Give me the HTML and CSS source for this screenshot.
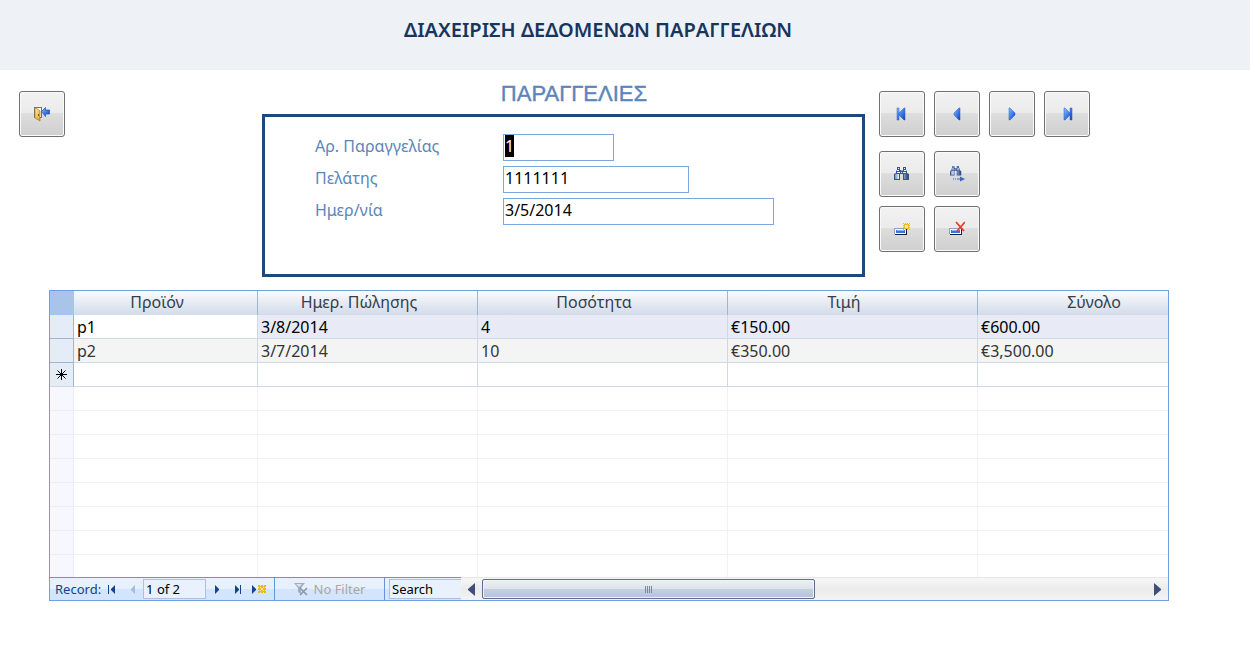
FILE: index.html
```html
<!DOCTYPE html>
<html lang="el">
<head>
<meta charset="utf-8">
<title>Διαχείριση Δεδομένων Παραγγελιών</title>
<link rel="stylesheet" href="styles.css">
</head>
<body>
<svg class="defs" aria-hidden="true">
  <defs>
    <linearGradient id="blue" x1="0" y1="0" x2="1" y2="1">
      <stop offset="0" stop-color="#8fc0ff"/><stop offset=".5" stop-color="#3f7fee"/><stop offset="1" stop-color="#123fae"/>
    </linearGradient>
    <linearGradient id="steel" x1="0" y1="0" x2="1" y2="0">
      <stop offset="0" stop-color="#6f8fc8"/><stop offset=".35" stop-color="#ffffff"/><stop offset="1" stop-color="#27427c"/>
    </linearGradient>
    <linearGradient id="gold" x1="0" y1="0" x2="1" y2="1">
      <stop offset="0" stop-color="#fff3b8"/><stop offset="1" stop-color="#e0980c"/>
    </linearGradient>
    <g id="star"><path d="M0 0h1v1h1v-1h1v1h1v-1h1v1h1v-1h1v1h-1v1h1v1h-1v1h1v1h-1v1h1v1h-1v-1h-1v1h-1v-1h-1v1h-1v-1h-1v1h-1v-1h1v-1h-1v-1h1v-1h-1v-1h1v-1h-1z" fill="#e8bb22"/><path d="M2 2h3v3h-3z" fill="#fff39a"/></g>
    <g id="glasses">
      <path d="M3 1h3v3h1l1 1 1-1v-3h3v3l1 1v2l2 1v6h-6v-6h-3v6h-6v-6l2-1v-2l1-1z" fill="#34559c"/>
      <path d="M4 2h1v1h-1zM10 2h1v1h-1zM3 4h2v1h-2zM10 4h2v1h-2zM3 6h3v1h-3zM9 6h3v1h-3zM7 6h1v1h-1z" fill="#eaf2ff"/>
      <path d="M1 8h4v5h-4zM10 8h4v5h-4z" fill="url(#steel)"/>
    </g>
    <g id="record"><path d="M1 8h12v6h-12z" fill="#16204a"/><path d="M0 7h12v6h-12z" fill="#8da0c4"/><path d="M1 8h11v5h-11z" fill="#fff"/><path d="M2 9h9v3h-9z" fill="#3c74dc"/><path d="M3 9h7v1h-7z" fill="#83b3fa"/></g>
  </defs>
</svg>

<header class="banner"><h1 class="banner-title">ΔΙΑΧΕΙΡΙΣΗ ΔΕΔΟΜΕΝΩΝ ΠΑΡΑΓΓΕΛΙΩΝ</h1></header>

<main>
  <section class="top">
    <button class="tool" type="button" aria-label="Έξοδος">
      <svg class="icon" viewBox="0 0 16 16"><path d="M0 1h8v11h-8z" fill="#77736a"/><path d="M2 2h5v9h-5z" fill="#fff"/><path d="M1 2h1l4 3v10l-5-3z" fill="url(#gold)" stroke="#a8771c" stroke-width=".7"/><path d="M4 8h1v2h-1z" fill="#7a5010"/><path d="M7.500 5.500l4-4v2.500h4v4h-4v2.500z" fill="url(#blue)" stroke="#2c58b8" stroke-width=".8"/></svg>
    </button>

    <form class="order">
      <h2 class="order-title">ΠΑΡΑΓΓΕΛΙΕΣ</h2>
      <div class="panel">
        <label class="panel-label" for="order-no">Αρ. Παραγγελίας</label><input class="field field-s" id="order-no" value="1" autofocus>
        <label class="panel-label" for="customer">Πελάτης</label><input class="field field-m" id="customer" value="1111111">
        <label class="panel-label" for="order-date">Ημερ/νία</label><input class="field field-l" id="order-date" value="3/5/2014">
      </div>
    </form>

    <div class="tools">
      <div class="tool-row tool-row-nav">
        <button class="tool" type="button" aria-label="Πρώτη"><svg class="icon" viewBox="0 0 16 16"><path d="M3 2h2v12h-2zM11 2v12h-1l-5-5v-2l5-5z" fill="url(#blue)" stroke="#2459c8" stroke-width=".5"/></svg></button>
        <button class="tool" type="button" aria-label="Προηγούμενη"><svg class="icon" viewBox="0 0 16 16"><path d="M11 2v12h-1l-5-5v-2l5-5z" fill="url(#blue)" stroke="#2459c8" stroke-width=".5"/></svg></button>
        <button class="tool" type="button" aria-label="Επόμενη"><svg class="icon" viewBox="0 0 16 16"><path d="M5 2v12h1l5-5v-2l-5-5z" fill="url(#blue)" stroke="#2459c8" stroke-width=".5"/></svg></button>
        <button class="tool" type="button" aria-label="Τελευταία"><svg class="icon" viewBox="0 0 16 16"><path d="M5 2v12h1l5-5v-2l-5-5zM11 2h2v12h-2z" fill="url(#blue)" stroke="#2459c8" stroke-width=".5"/></svg></button>
      </div>
      <div class="tool-row">
        <button class="tool" type="button" aria-label="Εύρεση"><svg class="icon" viewBox="0 0 16 16"><use href="#glasses"/></svg></button>
        <button class="tool" type="button" aria-label="Εύρεση επόμενου"><svg class="icon" viewBox="0 0 16 16"><use href="#glasses" transform="translate(1 -1) scale(.75)"/><path d="M4 12.500h1v1h-1zM6 12.500h1v1h-1zM8 12.500h3v-2l5 2.500-5 2.500v-2h-3z" fill="#3d68b8"/></svg></button>
      </div>
      <div class="tool-row">
        <button class="tool" type="button" aria-label="Νέα εγγραφή"><svg class="icon" viewBox="0 0 16 16"><use href="#record"/><use href="#star" x="9" y="2"/></svg></button>
        <button class="tool" type="button" aria-label="Διαγραφή"><svg class="icon" viewBox="0 0 16 16"><use href="#record"/><path d="M7 1l8 9M16 1l-8 9" stroke="#ee3a22" stroke-width="1.800"/></svg></button>
      </div>
    </div>
  </section>

  <section class="sheet">
    <div class="sheet-body">
      <table class="grid">
        <colgroup><col class="c-sel"><col class="c-product"><col class="c-date"><col class="c-num"><col class="c-num"><col class="c-num"></colgroup>
        <thead><tr><th class="corner"></th><th>Προϊόν</th><th>Ημερ. Πώλησης</th><th>Ποσότητα</th><th>Τιμή</th><th>Σύνολο</th></tr></thead>
        <tbody>
          <tr class="current"><td></td><td>p1</td><td>3/8/2014</td><td>4</td><td>€150.00</td><td>€600.00</td></tr>
          <tr class="alt"><td></td><td>p2</td><td>3/7/2014</td><td>10</td><td>€350.00</td><td>€3,500.00</td></tr>
          <tr class="new"><td><svg class="asterisk" viewBox="0 0 11 11"><path d="M5.500 0v11M0 5.500h11M1.500 1.500l8 8M9.500 1.500l-8 8" stroke="#000"/></svg></td><td></td><td></td><td></td><td></td><td></td></tr>
        </tbody>
        <tbody class="blank">
          <tr><td></td><td></td><td></td><td></td><td></td><td></td></tr>
          <tr><td></td><td></td><td></td><td></td><td></td><td></td></tr>
          <tr><td></td><td></td><td></td><td></td><td></td><td></td></tr>
          <tr><td></td><td></td><td></td><td></td><td></td><td></td></tr>
          <tr><td></td><td></td><td></td><td></td><td></td><td></td></tr>
          <tr><td></td><td></td><td></td><td></td><td></td><td></td></tr>
          <tr><td></td><td></td><td></td><td></td><td></td><td></td></tr>
          <tr><td></td><td></td><td></td><td></td><td></td><td></td></tr>
        </tbody>
      </table>
    </div>
    <div class="nav">
      <div class="nav-records">
        <label class="nav-label" for="rec">Record:</label>
        <button class="step" type="button" aria-label="First record"><svg class="step-icon" viewBox="0 0 8 9"><path d="M0 0h1v9h-1zM7 0v9l-4-4v-1z" fill="#15428b"/></svg></button>
        <button class="step" type="button" aria-label="Previous record"><svg class="step-icon" viewBox="0 0 8 9"><path d="M6 0v9l-4-4v-1z" fill="#a5bbdc"/></svg></button>
        <input class="nav-input" id="rec" value="1 of 2">
        <button class="step" type="button" aria-label="Next record"><svg class="step-icon" viewBox="0 0 8 9"><path d="M2 0v9l4-4v-1z" fill="#15428b"/></svg></button>
        <button class="step" type="button" aria-label="Last record"><svg class="step-icon" viewBox="0 0 8 9"><path d="M1 0v9l4-4v-1zM6 0h1v9h-1z" fill="#15428b"/></svg></button>
        <button class="step" type="button" aria-label="New record"><svg class="new-icon" viewBox="0 0 16 9"><path d="M1 0v9l4-4v-1z" fill="#15428b"/><path d="M7 0h2v1h1v-1h2v1h1v-1h2v2h-1v1h1v2h-1v1h1v2h-2v-1h-1v1h-2v-1h-1v1h-2v-2h1v-1h-1v-2h1v-1h-1z" fill="#e6b92d"/><path d="M9 2h1v1h2v-1h1v1h-1v2h1v1h-1v-1h-2v1h-1v-1h1v-2h-1z" fill="#fff08c"/></svg></button>
      </div>
      <button class="nav-filter" type="button" disabled><svg class="filter-icon" viewBox="0 0 14 14"><path d="M0 1h11l-4 5v6l-3-2v-4z" fill="#a3adbf"/><path d="M2 2h6l-3 3z" fill="#dde5f0"/><path d="M6 6l7 7M13 6l-7 7" stroke="#8b97ac" stroke-width="1.600"/></svg>No Filter</button>
      <div class="nav-search"><input class="search" value="Search" aria-label="Search"></div>
      <div class="scroll">
        <button class="scroll-btn" type="button" aria-label="Scroll left"><svg class="scroll-icon" viewBox="0 0 7 13"><path d="M7 0v13l-7-6v-1z" fill="#3f4f7c"/></svg></button>
        <div class="track"><div class="thumb"><i class="grip"></i></div></div>
        <button class="scroll-btn" type="button" aria-label="Scroll right"><svg class="scroll-icon" viewBox="0 0 7 13"><path d="M0 0v13l7-6v-1z" fill="#3f4f7c"/></svg></button>
      </div>
    </div>
  </section>
</main>
<script>
  const orderNo = document.getElementById('order-no');
  orderNo.focus();
  orderNo.select();
</script>
</body>
</html>
```
FILE: styles.css
```css
* { box-sizing: border-box; }
body { margin: 0; background: #fff; color: #000; font: 16px/22px "Noto Sans", "Open Sans", sans-serif; }
button { padding: 0; border: 0; background: none; font: inherit; }
input { font: inherit; color: inherit; outline: 0; border-radius: 0; }
svg { display: block; }
.defs { position: absolute; width: 0; height: 0; }

.banner { height: 70px; padding: 16px 54px 0 0; background: #eef1f6; }
.banner-title { margin: 0; color: #17365d; font-size: 20px; line-height: 28px; font-weight: 600; text-align: center; }

.top { display: grid; grid-template-columns: 243px minmax(0, 603px) 1fr; padding: 0 19px; }
.top > .tool { margin-top: 21px; }
.tool { display: grid; place-items: center; width: 46px; height: 46px; border: 1px solid #707070; border-radius: 3px; box-shadow: inset 0 0 0 1px #fafafa; background: linear-gradient(#f2f2f2, #ebebeb 48%, #dddddd 49%, #cfcfcf); }
.icon { width: 16px; height: 16px; }

.order-title { margin: 0; padding: 10px 0 6px 21px; color: #5b85bb; font: 22px/28px "Liberation Sans", Arial, sans-serif; -webkit-text-stroke: 0.4px #5b85bb; text-align: center; }
.panel { display: grid; grid-template-columns: 188px 1fr; align-content: start; align-items: center; row-gap: 5px; min-height: 163px; padding: 17px 50px; border: 3px solid #1f497d; }
.panel-label { padding-bottom: 3px; color: #5b85bb; }
.field { height: 27px; padding: 0 2px 3px 1px; border: 1px solid #7da7dc; background: #fff; }
.field::selection { background: #000; color: #fff; }
.field-s { width: 111px; }
.field-m { width: 186px; }
.field-l { width: 271px; }

.tools { padding: 21px 0 0 14px; }
.tool-row { display: flex; gap: 9px; margin-bottom: 9px; }
.tool-row-nav { margin-bottom: 14px; }

.sheet { margin: 13px 81px 0 49px; border: 1px solid #6f9fe2; }
.sheet-body { height: 286px; overflow: hidden; }
.grid { width: 1178px; table-layout: fixed; border-collapse: separate; border-spacing: 0; }
.c-sel { width: 24px; }
.c-product { width: 184px; }
.c-date { width: 220px; }
.c-num { width: 250px; }
.grid th { height: 24px; padding: 0 17px 2px 0; border-right: 1px solid #9eb6ce; background: linear-gradient(#f9fbfd, #d3dbe9); color: #333f4c; font-weight: 400; }
.grid .corner { padding: 0; border: 1px solid #9ec6f7; background: #a9c4e9; }
.grid td { height: 24px; padding: 0 3px; border-right: 1px solid #d0d7e5; border-bottom: 1px solid #d0d7e5; }
.grid td:first-child { border-color: #9eb6ce; background: #e4ecf7; }
.current td { background: #e8ebf5; }
.current td:nth-child(2) { background: #fff; }
.alt td { background: #f4f4f4; color: #333; }
.new td:first-child { padding: 0 0 0 6px; border-bottom-color: #d0d7e5; }
.asterisk { width: 11px; height: 11px; }
.grid .blank td { border-color: #f2f2f4; }
.grid .blank td:first-child { border-color: #ebedf5; background: #f7f7ff; }

.nav { display: flex; height: 23px; font-size: 13px; line-height: 20px; }
.nav-records, .nav-filter, .nav-search { border-top: 1px solid #6694d6; border-right: 1px solid #6694d6; background: linear-gradient(#e7f1fe 50%, #d3e5fc 51%); }
.nav-records { display: flex; align-items: center; width: 225px; padding: 0 5px; }
.nav-label { flex: 1; color: #15428b; }
.step { width: 21px; height: 18px; }
.step-icon { width: 8px; height: 9px; margin: 0 auto; }
.new-icon { width: 16px; height: 9px; margin-left: 3px; }
.nav-input { width: 63px; height: 20px; padding: 0 2px; border: 1px solid #a9c1e2; background: #e8f1fc; }
.nav-filter { display: flex; align-items: center; justify-content: center; gap: 6px; width: 110px; color: #a7a7a7; }
.filter-icon { width: 14px; height: 14px; }
.nav-search { width: 76px; padding: 1px 0 0 4px; border-right: 0; }
.search { display: block; width: 100%; height: 20px; padding: 0 2px; border: 1px solid #a9c1e2; border-right: 0; background: #e8f1fc; }
.scroll { display: flex; flex: 1; align-items: center; border-top: 1px solid #e6e6e6; background: linear-gradient(#f7f7f7, #ebebeb 50%, #f3f3f3); }
.scroll-btn { display: grid; place-items: center; width: 21px; height: 20px; }
.scroll-icon { width: 7px; height: 13px; }
.track { flex: 1; }
.thumb { display: grid; place-items: center; width: 50%; height: 20px; border: 1px solid #5f6f92; border-radius: 2px; box-shadow: inset 0 0 0 1px #eef2f8; background: linear-gradient(#eef1f5, #dde3eb 48%, #c5d0de 50%, #b4c4da); }
.grip { width: 7px; height: 7px; background: repeating-linear-gradient(90deg, #7b8798 0 1px, transparent 1px 2px); }
```
